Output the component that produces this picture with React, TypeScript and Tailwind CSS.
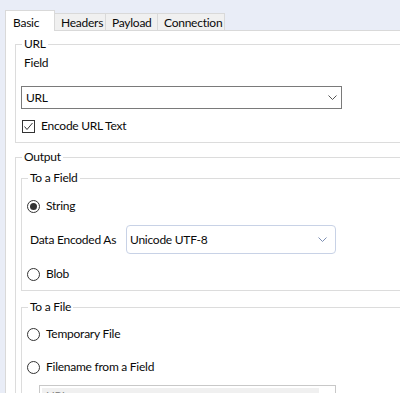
import React from "react";

const tabs = [
  { label: "Basic", active: true, w: "w-[50px]" },
  { label: "Headers", active: false, w: "w-[52px]" },
  { label: "Payload", active: false, w: "w-[53px]" },
  { label: "Connection", active: false, w: "w-[68px]" },
];

function Chevron({ className }: { className?: string }) {
  return (
    <svg width="9" height="5" viewBox="0 0 9 5" className={className} fill="none">
      <path d="M0.5 0.5L4.5 4.5L8.5 0.5" stroke="currentColor" strokeWidth="1" />
    </svg>
  );
}

function Radio({ checked, label }: { checked?: boolean; label: string }) {
  return (
    <div className="flex h-[16px] items-center gap-[6px]">
      <span className="flex h-[13px] w-[13px] items-center justify-center rounded-full border border-[#333]">
        {checked && <span className="h-[7px] w-[7px] rounded-full bg-[#333]" />}
      </span>
      <span>{label}</span>
    </div>
  );
}

function Group({ title, className, children }: { title: string; className?: string; children: React.ReactNode }) {
  return (
    <fieldset className={`border border-[#dcdcdc] pl-[5px] ${className ?? ""}`}>
      <legend className="ml-px px-[2px]">{title}</legend>
      {children}
    </fieldset>
  );
}

export default function App() {
  return (
    <div className="h-[393px] w-[400px] overflow-hidden bg-[#e9edf7] font-['Segoe_UI',Lato,sans-serif] text-[12px] leading-[16px] tracking-[-0.25px] text-[#0a0a0a]">
      <div className="flex h-[30px] w-[600px] items-end pl-[5px] pt-[10px]">
        {tabs.map((t) =>
          t.active ? (
            <div
              key={t.label}
              className={`${t.w} relative z-10 -mb-px h-[21px] border-x border-t border-[#d9d9d9] bg-white pl-[7px] pt-[4px]`}
            >
              {t.label}
            </div>
          ) : (
            <div
              key={t.label}
              className={`${t.w} -ml-px h-[17px] border-x border-t border-[#d9d9d9] bg-[#f0f0f0] pl-[6px] pt-[1px] first:ml-0`}
            >
              {t.label}
            </div>
          )
        )}
      </div>
      <div className="ml-[5px] h-[400px] w-[440px] border-l border-t border-[#d9d9d9] bg-white pl-[9px] pt-[5px]">
        <Group title="URL" className="pb-[8px]">
          <div className="pl-[3px] pt-[3px]">Field</div>
          <div className="mt-[15px] flex h-[23px] w-[321px] items-center justify-between border border-[#7a7a7a] pl-[4px] pr-[4px]">
            <span>URL</span>
            <Chevron className="text-[#555]" />
          </div>
          <div className="mt-[9px] flex h-[16px] items-center gap-[6px] pl-px">
            <span className="flex h-[13px] w-[13px] items-center justify-center border border-[#333] bg-white">
              <svg width="11" height="11" viewBox="0 0 11 11" fill="none">
                <path d="M1.5 5.5L4 8.5L9.5 2" stroke="#333" strokeWidth="1" />
              </svg>
            </span>
            <span>Encode URL Text</span>
          </div>
        </Group>

        <Group title="Output" className="mt-[6px] pt-[5px]">
          <Group title="To a Field" className="pb-[8px]">
            <div className="mt-[12px]">
              <Radio checked label="String" />
            </div>
            <div className="mt-[11px] flex h-[29px] items-center pl-[3px]">
              <span className="w-[96px]">Data Encoded As</span>
              <div className="flex h-[29px] w-[210px] items-center justify-between rounded-[4px] border border-[#c8d2e6] pl-[3px] pr-[8px]">
                <span>Unicode UTF-8</span>
                <Chevron className="text-[#7d8fb3]" />
              </div>
            </div>
            <div className="mt-[12px]">
              <Radio label="Blob" />
            </div>
          </Group>

          <Group title="To a File" className="mt-[8px] pb-[10px]">
            <div className="mt-[11px]">
              <Radio label="Temporary File" />
            </div>
            <div className="mt-[17px]">
              <Radio label="Filename from a Field" />
            </div>
            <div className="ml-[12px] mt-[10px] h-[23px] w-[297px] border border-[#c8c8c8] p-[2px]">
              <div className="h-full w-[277px] bg-[#f0f0f0] pl-[4px] text-[#8a8a8a]">URL</div>
            </div>
          </Group>
        </Group>
      </div>
    </div>
  );
}
